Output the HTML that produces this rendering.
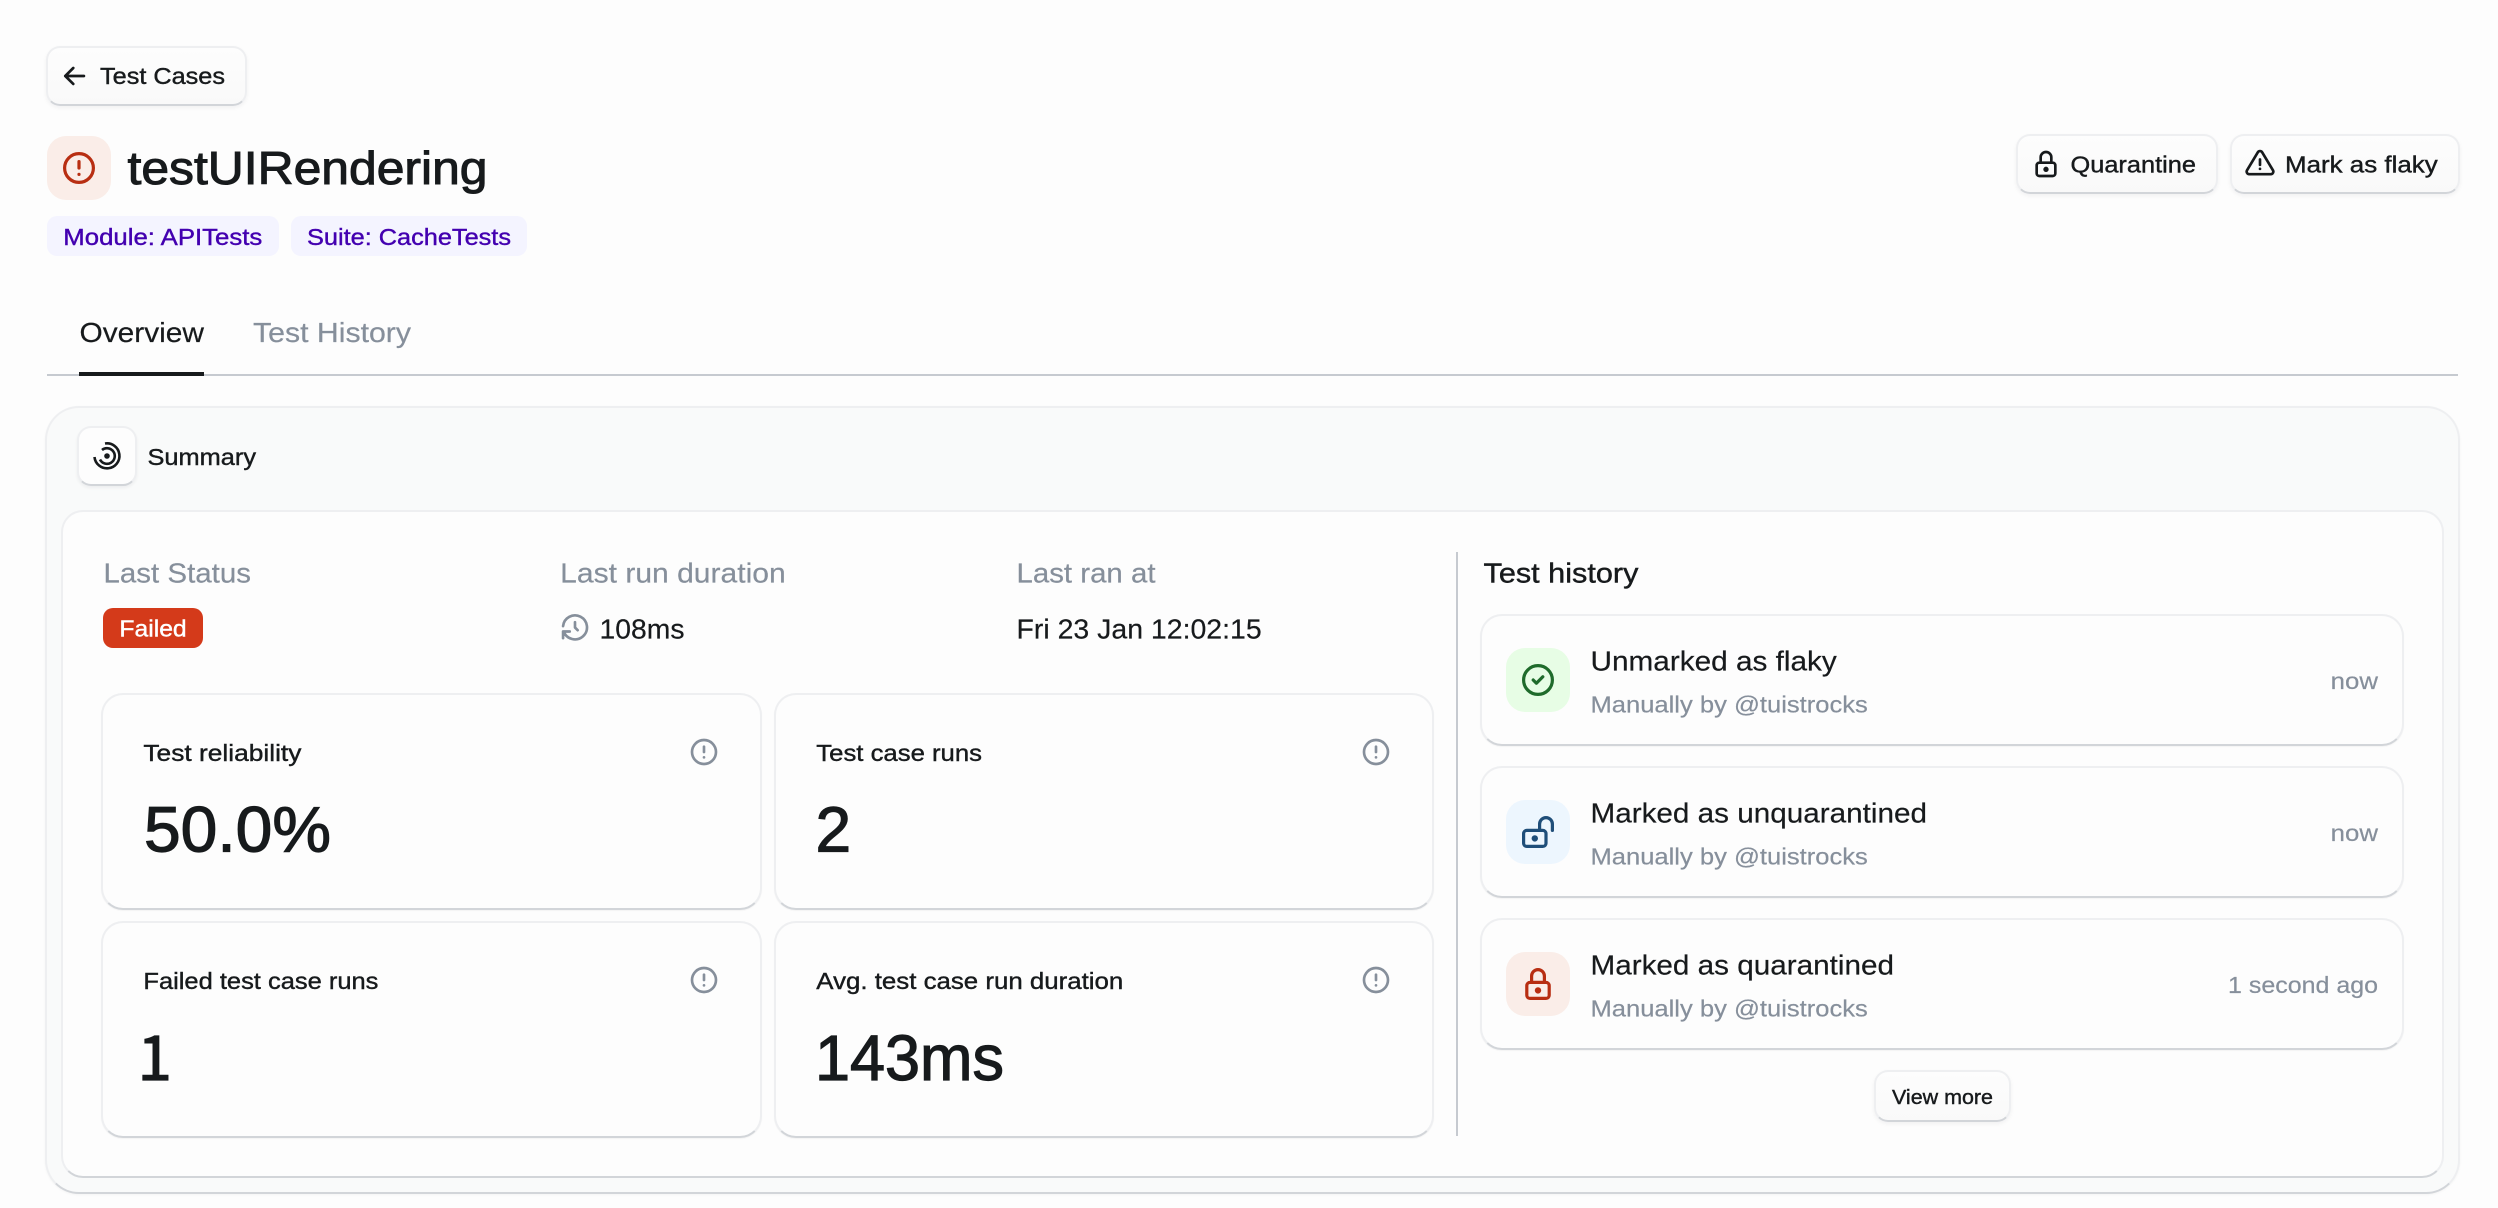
<!DOCTYPE html>
<html lang="en">
<head>
<meta charset="utf-8">
<title>testUIRendering</title>
<style>
html,body{margin:0;padding:0;width:2498px;height:1208px;overflow:hidden;background:#fdfdfd}
.b{position:absolute;box-sizing:border-box;border:2px solid #eeeff1;border-bottom-color:#d2d5d9;background:#fdfdfd}
.btn{background:linear-gradient(#fdfdfd,#f9f9f9);border-radius:14px;box-shadow:0 2px 4px rgba(20,25,30,.05)}
.card{border-radius:22px;box-shadow:0 1px 1px rgba(20,25,30,.04)}
.t{position:absolute;border-radius:19px}
.tag{position:absolute;border-radius:10px;background:#f4f4ff}
svg{position:absolute;left:0;top:0}
text{font-family:"Liberation Sans",sans-serif;fill:#171a1c;stroke:#171a1c;stroke-width:.2}
.m{stroke-width:.4}
.g{fill:#868f9b;stroke:#868f9b;stroke-width:.2}
.big{stroke-width:1.2}
.i{fill:none;stroke-width:2;stroke-linecap:round;stroke-linejoin:round}
</style>
</head>
<body>
<div class="b btn" style="left:46px;top:46px;width:201px;height:60px"></div>
<div class="t" style="left:47px;top:136px;width:64px;height:64px;background:#faede8"></div>
<div class="tag" style="left:47px;top:216px;width:232px;height:40px"></div>
<div class="tag" style="left:291px;top:216px;width:236px;height:40px"></div>
<div class="b btn" style="left:2016px;top:134px;width:202px;height:60px"></div>
<div class="b btn" style="left:2230px;top:134px;width:230px;height:60px"></div>
<div style="position:absolute;left:47px;top:374px;width:2411px;height:2px;background:#c6cad0"></div>
<div style="position:absolute;left:79px;top:372px;width:125px;height:4px;background:#171a1c"></div>

<div class="b" style="left:45px;top:406px;width:2415px;height:788px;border-radius:34px;background:#f9fafa;box-shadow:0 1px 2px rgba(20,25,30,.04)"></div>
<div class="b" style="left:77px;top:426px;width:60px;height:60px;border-radius:14px;box-shadow:0 2px 3px rgba(20,25,30,.05)"></div>
<div class="b" style="left:61px;top:510px;width:2383px;height:668px;border-radius:22px"></div>

<div style="position:absolute;left:103px;top:608px;width:100px;height:40px;border-radius:10px;background:#d43a1a"></div>
<div style="position:absolute;left:1456px;top:552px;width:2px;height:584px;background:#c6cad0"></div>

<div class="b card" style="left:101px;top:693px;width:661px;height:217px"></div>
<div class="b card" style="left:774px;top:693px;width:660px;height:217px"></div>
<div class="b card" style="left:101px;top:921px;width:661px;height:217px"></div>
<div class="b card" style="left:774px;top:921px;width:660px;height:217px"></div>

<div class="b card" style="left:1480px;top:614px;width:924px;height:132px"></div>
<div class="b card" style="left:1480px;top:766px;width:924px;height:132px"></div>
<div class="b card" style="left:1480px;top:918px;width:924px;height:132px"></div>
<div class="t" style="left:1506px;top:648px;width:64px;height:64px;background:#e7fde5"></div>
<div class="t" style="left:1506px;top:800px;width:64px;height:64px;background:#edf6fe"></div>
<div class="t" style="left:1506px;top:952px;width:64px;height:64px;background:#faede8"></div>
<div class="b btn" style="left:1874px;top:1070px;width:137px;height:52px"></div>

<svg width="2498" height="1208" viewBox="0 0 2498 1208" xmlns="http://www.w3.org/2000/svg">
<!-- header -->
<g class="i" stroke="#171a1c" transform="translate(58.6 60) scale(1.333)"><path d="M5 12h14M5 12l6 6M5 12l6-6"/></g>
<text class="m" x="100" y="84" font-size="23" textLength="125" lengthAdjust="spacingAndGlyphs">Test Cases</text>
<g class="i" stroke="#b82e12" transform="translate(59.8 148.8) scale(1.6)"><path d="M3 12a9 9 0 1 0 18 0a9 9 0 0 0-18 0M12 8v4M12 16h.01"/></g>
<text x="127.5" y="184" font-size="46" textLength="360" lengthAdjust="spacingAndGlyphs" style="stroke-width:1">testUIRendering</text>
<text x="63.3" y="245" font-size="23" textLength="199" lengthAdjust="spacingAndGlyphs" style="fill:#4300b0;stroke:#4300b0;stroke-width:.4">Module: APITests</text>
<text x="307" y="245" font-size="23" textLength="204" lengthAdjust="spacingAndGlyphs" style="fill:#4300b0;stroke:#4300b0;stroke-width:.4">Suite: CacheTests</text>
<text x="79.5" y="342" font-size="27.5" textLength="124.5" lengthAdjust="spacingAndGlyphs">Overview</text>
<text class="g" x="253" y="342" font-size="27.5" textLength="158" lengthAdjust="spacingAndGlyphs">Test History</text>
<g class="i" stroke="#171a1c" transform="translate(2030 148) scale(1.333)"><path d="M5 13a2 2 0 0 1 2-2h10a2 2 0 0 1 2 2v6a2 2 0 0 1-2 2h-10a2 2 0 0 1-2-2v-6zM11 16a1 1 0 1 0 2 0a1 1 0 0 0-2 0M8 11v-4a4 4 0 1 1 8 0v4"/></g>
<text class="m" x="2070.5" y="172.5" font-size="23" textLength="125.5" lengthAdjust="spacingAndGlyphs">Quarantine</text>
<g class="i" stroke="#171a1c" transform="translate(2244 147.5) scale(1.333)"><path d="M12 9v4M10.363 3.591l-8.106 13.534a1.914 1.914 0 0 0 1.636 2.871h16.214a1.914 1.914 0 0 0 1.636-2.87l-8.106-13.536a1.914 1.914 0 0 0-3.274 0zM12 16h.01"/></g>
<text class="m" x="2285" y="172.5" font-size="23" textLength="152.7" lengthAdjust="spacingAndGlyphs">Mark as flaky</text>

<!-- summary -->
<g fill="none" stroke="#171a1c" stroke-width="2.6" stroke-linecap="butt">
<path d="M105 443.5 A12.5 12.5 0 1 1 94.5 457"/>
<path d="M102 450 A7.8 7.8 0 1 1 100 459.5"/>
</g>
<circle cx="107" cy="456" r="2.8" fill="#171a1c"/>
<text class="m" x="147.5" y="465" font-size="23" textLength="108.5" lengthAdjust="spacingAndGlyphs">Summary</text>

<text class="g" x="103.5" y="582.5" font-size="27.5" textLength="147.5" lengthAdjust="spacingAndGlyphs">Last Status</text>
<text class="g" x="560.2" y="582.5" font-size="27.5" textLength="225.5" lengthAdjust="spacingAndGlyphs">Last run duration</text>
<text class="g" x="1016.5" y="582.5" font-size="27.5" textLength="139" lengthAdjust="spacingAndGlyphs">Last ran at</text>
<text x="119.4" y="636.5" font-size="23" textLength="67.3" lengthAdjust="spacingAndGlyphs" style="fill:#fff;stroke:#fff;stroke-width:.4">Failed</text>
<g class="i" stroke="#868f9b" transform="translate(559 611.5) scale(1.333)"><path d="M12 8v4l2 2M3.05 11a9 9 0 1 1 .5 4m-.5 5v-5h5"/></g>
<text x="599.5" y="638.5" font-size="27.5" textLength="85" lengthAdjust="spacingAndGlyphs">108ms</text>
<text x="1016.5" y="638.5" font-size="27.5" textLength="245.2" lengthAdjust="spacingAndGlyphs">Fri 23 Jan 12:02:15</text>

<!-- metric cards -->
<text class="m" x="143.4" y="761" font-size="23.5" textLength="158" lengthAdjust="spacingAndGlyphs">Test reliability</text>
<text class="m" x="816.3" y="761" font-size="23.5" textLength="165.7" lengthAdjust="spacingAndGlyphs">Test case runs</text>
<text class="m" x="143.4" y="989" font-size="23.5" textLength="235" lengthAdjust="spacingAndGlyphs">Failed test case runs</text>
<text class="m" x="816.3" y="989" font-size="23.5" textLength="307" lengthAdjust="spacingAndGlyphs">Avg. test case run duration</text>
<g class="i" stroke="#868f9b">
<g transform="translate(688 736) scale(1.333)"><path d="M3 12a9 9 0 1 0 18 0a9 9 0 0 0-18 0M12 8v4M12 16h.01"/></g>
<g transform="translate(1360 736) scale(1.333)"><path d="M3 12a9 9 0 1 0 18 0a9 9 0 0 0-18 0M12 8v4M12 16h.01"/></g>
<g transform="translate(688 964) scale(1.333)"><path d="M3 12a9 9 0 1 0 18 0a9 9 0 0 0-18 0M12 8v4M12 16h.01"/></g>
<g transform="translate(1360 964) scale(1.333)"><path d="M3 12a9 9 0 1 0 18 0a9 9 0 0 0-18 0M12 8v4M12 16h.01"/></g>
</g>
<text class="big" x="144" y="851.5" font-size="64" textLength="187" lengthAdjust="spacingAndGlyphs">50.0%</text>
<text class="big" x="815.5" y="851.5" font-size="64">2</text>
<text class="big" x="137.5" y="1080" font-size="62" style="font-family:'Noto Sans CJK SC','Liberation Sans',sans-serif">1</text>
<text class="big" x="815" y="1080" font-size="64" textLength="189" lengthAdjust="spacingAndGlyphs">143ms</text>

<!-- history -->
<text class="m" x="1483.5" y="582.5" font-size="27.5" textLength="154.9" lengthAdjust="spacingAndGlyphs">Test history</text>

<g class="i" stroke="#1f6b2b" transform="translate(1518.8 660.8) scale(1.6)"><path d="M3 12a9 9 0 1 0 18 0a9 9 0 0 0-18 0M9 12l2 2l4-4"/></g>
<text x="1590.5" y="670.5" font-size="27.5" textLength="246.3" lengthAdjust="spacingAndGlyphs">Unmarked as flaky</text>
<text class="g" x="1590.5" y="712.3" font-size="23.5" textLength="277.3" lengthAdjust="spacingAndGlyphs">Manually by @tuistrocks</text>
<text class="g" x="2330.7" y="689" font-size="23.5" textLength="47.3" lengthAdjust="spacingAndGlyphs">now</text>

<g class="i" stroke="#1f4e79" transform="translate(1518.8 812.8) scale(1.6)"><path d="M3 13a2 2 0 0 1 2-2h10a2 2 0 0 1 2 2v6a2 2 0 0 1-2 2h-10a2 2 0 0 1-2-2v-6zM9 16a1 1 0 1 0 2 0a1 1 0 0 0-2 0M13 11v-4a4 4 0 1 1 8 0v4"/></g>
<text x="1590.5" y="822.5" font-size="27.5" textLength="336.5" lengthAdjust="spacingAndGlyphs">Marked as unquarantined</text>
<text class="g" x="1590.5" y="864.3" font-size="23.5" textLength="277.3" lengthAdjust="spacingAndGlyphs">Manually by @tuistrocks</text>
<text class="g" x="2330.7" y="841" font-size="23.5" textLength="47.3" lengthAdjust="spacingAndGlyphs">now</text>

<g class="i" stroke="#b82e12" transform="translate(1518.8 964.8) scale(1.6)"><path d="M5 13a2 2 0 0 1 2-2h10a2 2 0 0 1 2 2v6a2 2 0 0 1-2 2h-10a2 2 0 0 1-2-2v-6zM11 16a1 1 0 1 0 2 0a1 1 0 0 0-2 0M8 11v-4a4 4 0 1 1 8 0v4"/></g>
<text x="1590.5" y="974.5" font-size="27.5" textLength="303.5" lengthAdjust="spacingAndGlyphs">Marked as quarantined</text>
<text class="g" x="1590.5" y="1016.3" font-size="23.5" textLength="277.3" lengthAdjust="spacingAndGlyphs">Manually by @tuistrocks</text>
<text class="g" x="2228" y="993" font-size="23.5" textLength="150" lengthAdjust="spacingAndGlyphs">1 second ago</text>

<text class="m" x="1892" y="1104" font-size="20" textLength="101" lengthAdjust="spacingAndGlyphs">View more</text>
</svg>
</body>
</html>
